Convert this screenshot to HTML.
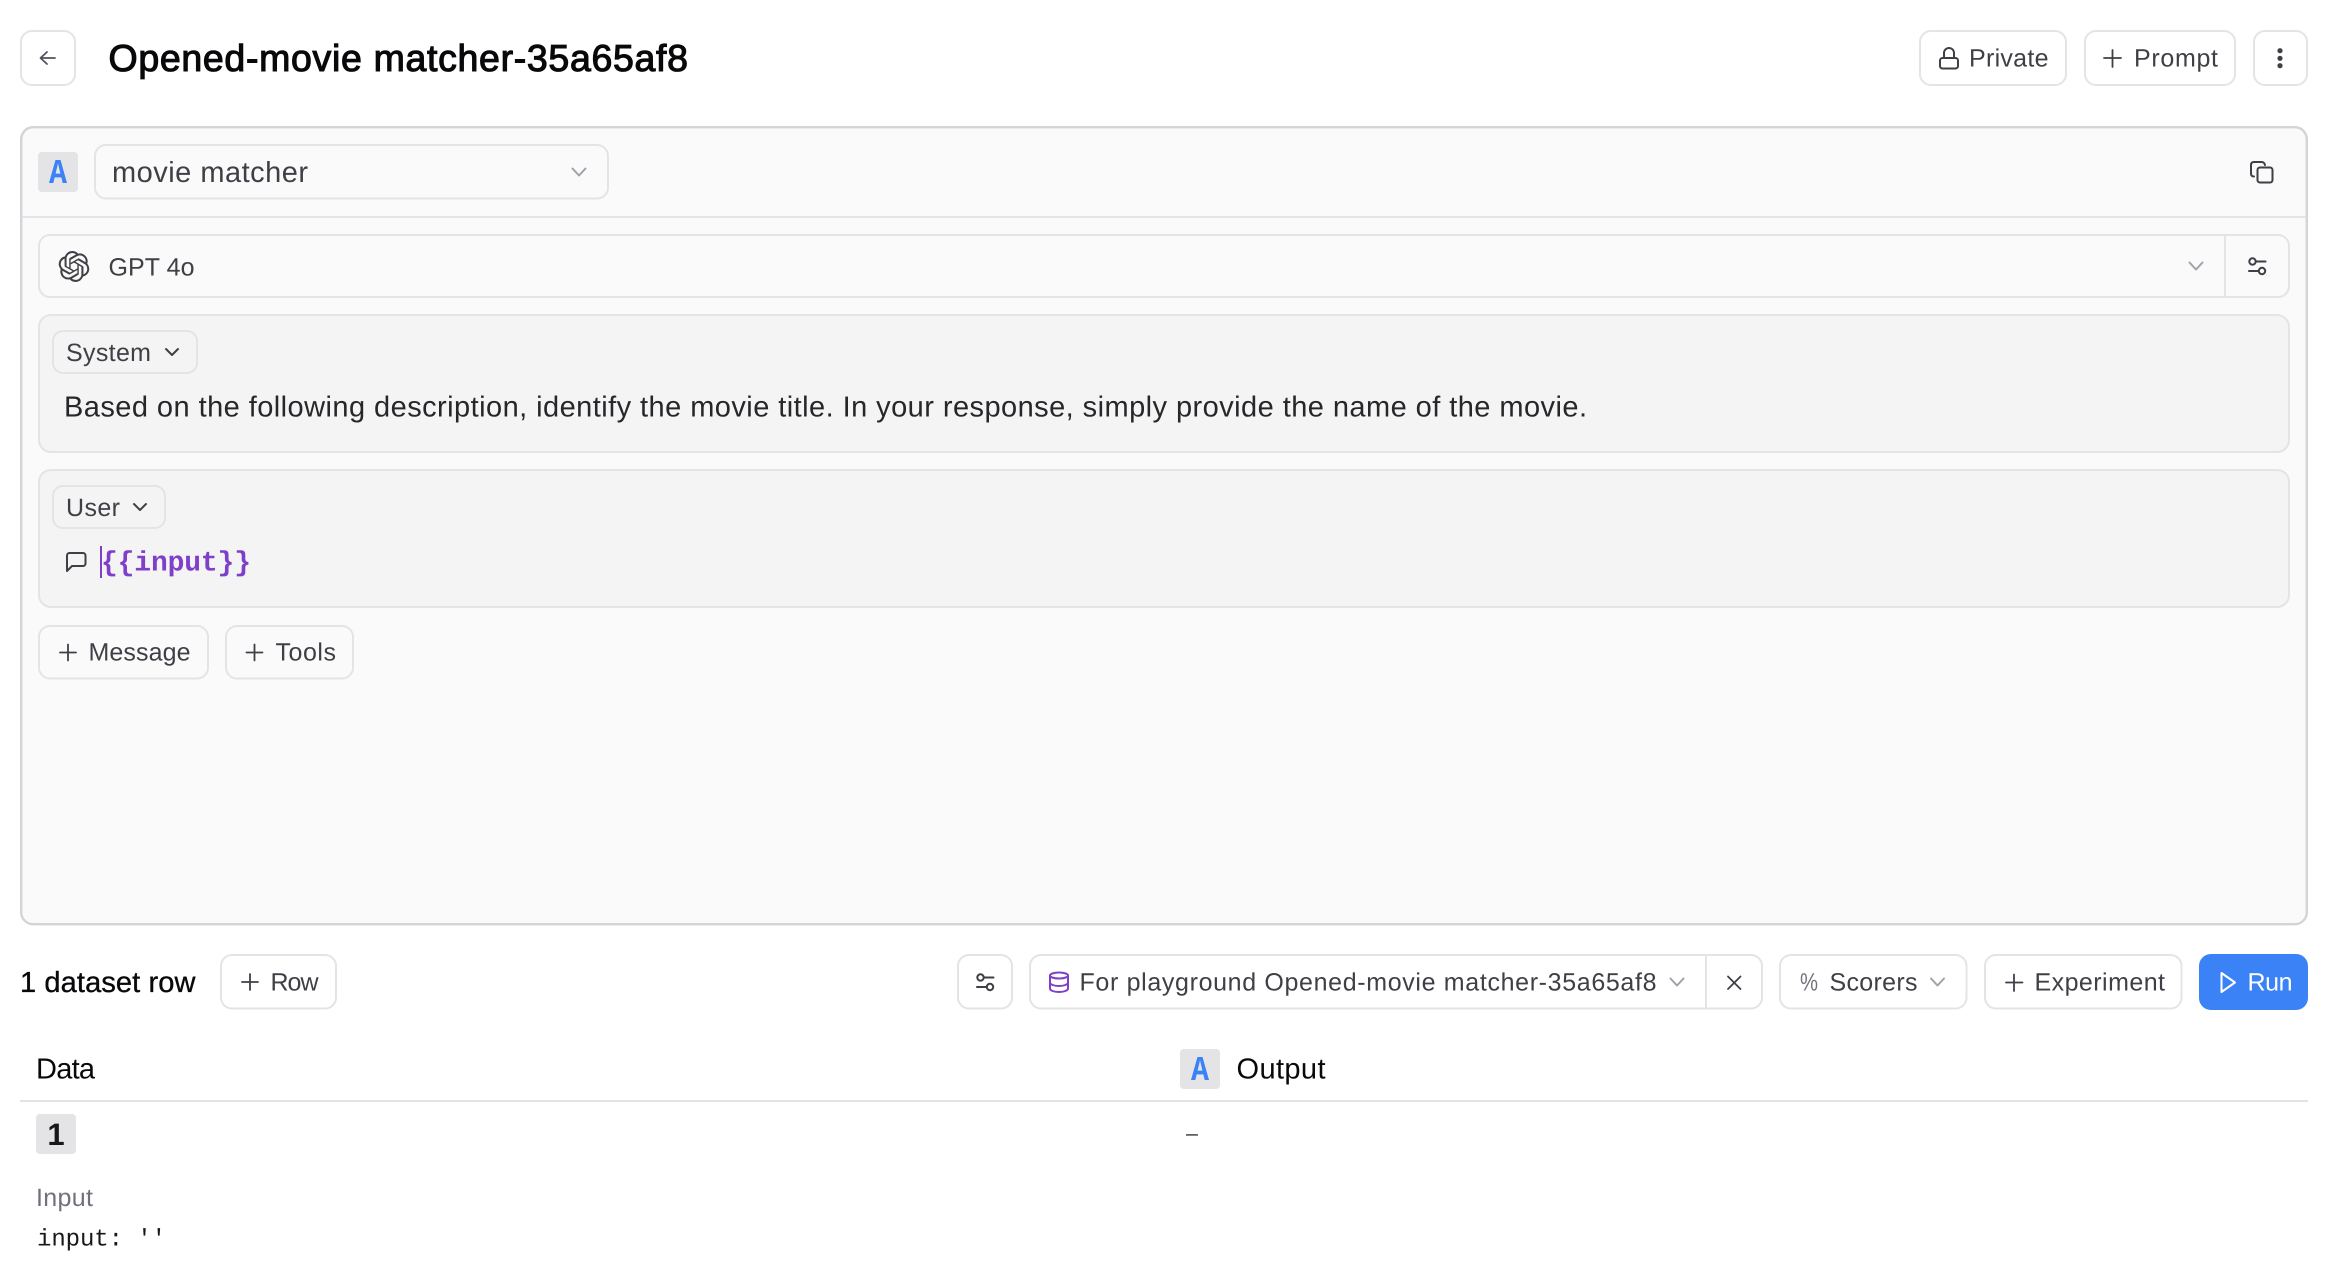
<!DOCTYPE html>
<html lang="en">
<head>
<meta charset="utf-8">
<title>Opened-movie matcher-35a65af8</title>
<style>
html,body{margin:0;padding:0;background:#fff;width:2326px;height:1280px;overflow:hidden}
svg{display:block}
text{font-family:"Liberation Sans",sans-serif;white-space:pre;text-rendering:geometricPrecision}
.mono{font-family:"Liberation Mono",monospace}
.btn{font-size:25px;fill:#3f3f46}
.box{fill:#fff;stroke:#e4e4e7;stroke-width:2}
.boxp{fill:#fafafa;stroke:#e4e4e7;stroke-width:2}
.ic{fill:none;stroke:#3f3f46;stroke-width:2;stroke-linecap:round;stroke-linejoin:round}
.pl{fill:none;stroke:#3f3f46;stroke-width:1.800;stroke-linecap:round}
.chev{fill:none;stroke:#a1a1aa;stroke-width:2;stroke-linecap:round;stroke-linejoin:round}
.med{stroke:currentColor;stroke-width:.35}
</style>
</head>
<body>
<svg width="2326" height="1280" viewBox="0 0 2326 1280" xmlns="http://www.w3.org/2000/svg">
  <!-- Header -->
  <rect class="box" x="21" y="31" width="54" height="54" rx="11"/>
  <path class="ic" d="M47 52l-6.500 6 6.500 6M41 58h14" style="stroke:#52525b;stroke-width:1.800"/>
  <text x="108.500" y="71" font-size="37.500" fill="#09090b" color="#09090b" stroke="#09090b" stroke-width="1.100" textLength="579.500">Opened-movie matcher-35a65af8</text>

  <rect class="box" x="1920" y="31" width="146" height="54" rx="11"/>
  <rect class="ic" x="1940" y="58" width="18" height="10.500" rx="2.500"/>
  <path class="ic" d="M1944 58v-5a5 5 0 0 1 10 0v5"/>
  <text class="btn" x="1969" y="66.500" textLength="79.500">Private</text>

  <rect class="box" x="2085" y="31" width="150" height="54" rx="11"/>
  <path class="pl" d="M2104 58h17M2112.500 50v17"/>
  <text class="btn" x="2134" y="66.500" textLength="84">Prompt</text>

  <rect class="box" x="2254" y="31" width="53" height="54" rx="11"/>
  <circle cx="2280" cy="50.700" r="2.600" fill="#3f3f46"/>
  <circle cx="2280" cy="58.300" r="2.600" fill="#3f3f46"/>
  <circle cx="2280" cy="65.700" r="2.600" fill="#3f3f46"/>

  <!-- Prompt panel -->
  <rect x="21.200" y="127.200" width="2285.600" height="797" rx="12" fill="#fafafa" stroke="#d4d4d8" stroke-width="2.400"/>
  <rect x="22" y="216" width="2284" height="2" fill="#e4e4e7"/>

  <rect x="38" y="152" width="40" height="40" rx="4" fill="#e4e4e7"/>
  <text class="mono" x="58" y="183" font-size="35" font-weight="700" fill="#3b82f6" text-anchor="middle" textLength="18" lengthAdjust="spacingAndGlyphs">A</text>

  <rect class="boxp" x="95" y="145" width="513" height="53.500" rx="11"/>
  <text x="112" y="182" font-size="29" fill="#3f3f46" textLength="196">movie matcher</text>
  <path class="chev" d="M572.500 168.500l6.500 7 6.500-7"/>

  <rect class="ic" x="2257.500" y="167.500" width="15" height="15" rx="2.500"/>
  <path class="ic" d="M2254 176.500c-2 0-3-1-3-3v-8.500c0-2 1-3 3-3h7.500c2 0 3 1 3.500 3"/>

  <!-- Model row -->
  <rect class="boxp" x="39" y="235" width="2250" height="62" rx="11"/>
  <rect x="2224" y="235" width="2" height="62" fill="#e4e4e7"/>
  <g transform="translate(58.500,251) scale(1.290)">
    <path fill="#3f3f46" d="M22.2819 9.8211a5.9847 5.9847 0 0 0-.5157-4.9108 6.0462 6.0462 0 0 0-6.5098-2.9A6.0651 6.0651 0 0 0 4.9807 4.1818a5.9847 5.9847 0 0 0-3.9977 2.9 6.0462 6.0462 0 0 0 .7427 7.0966 5.98 5.98 0 0 0 .511 4.9107 6.051 6.051 0 0 0 6.5146 2.9001A5.9847 5.9847 0 0 0 13.2599 24a6.0557 6.0557 0 0 0 5.7718-4.2058 5.9894 5.9894 0 0 0 3.9977-2.9001 6.0557 6.0557 0 0 0-.7475-7.0729zm-9.022 12.6081a4.4755 4.4755 0 0 1-2.8764-1.0408l.1419-.0804 4.7783-2.7582a.7948.7948 0 0 0 .3927-.6813v-6.7369l2.02 1.1686a.071.071 0 0 1 .038.052v5.5826a4.504 4.504 0 0 1-4.4945 4.4944zm-9.6607-4.1254a4.4708 4.4708 0 0 1-.5346-3.0137l.142.0852 4.783 2.7582a.7712.7712 0 0 0 .7806 0l5.8428-3.3685v2.3324a.0804.0804 0 0 1-.0332.0615L9.74 19.9502a4.4992 4.4992 0 0 1-6.1408-1.6464zM2.3408 7.8956a4.485 4.485 0 0 1 2.3655-1.9728V11.6a.7664.7664 0 0 0 .3879.6765l5.8144 3.3543-2.0201 1.1685a.0757.0757 0 0 1-.071 0l-4.8303-2.7865A4.504 4.504 0 0 1 2.3408 7.872zm16.5963 3.8558L13.1038 8.364 15.1192 7.2a.0757.0757 0 0 1 .071 0l4.8303 2.7913a4.4944 4.4944 0 0 1-.6765 8.1042v-5.6772a.79.79 0 0 0-.407-.667zm2.0107-3.0231l-.142-.0852-4.7735-2.7818a.7759.7759 0 0 0-.7854 0L9.409 9.2297V6.8974a.0662.0662 0 0 1 .0284-.0615l4.8303-2.7866a4.4992 4.4992 0 0 1 6.6802 4.66zM8.3065 12.863l-2.02-1.1638a.0804.0804 0 0 1-.038-.0567V6.0742a4.4992 4.4992 0 0 1 7.3757-3.4537l-.142.0805L8.704 5.459a.7948.7948 0 0 0-.3927.6813zm1.0976-2.3654l2.602-1.4998 2.6069 1.4998v2.9994l-2.5974 1.4997-2.6067-1.4997Z"/>
  </g>
  <text class="btn" x="108.500" y="275.500" textLength="86">GPT 4o</text>
  <path class="chev" d="M2189.500 262.500l6.500 7 6.500-7"/>
  <g id="sl">
    <circle class="ic" cx="2252.500" cy="261.500" r="3.200"/>
    <path class="ic" d="M2256 261.500h9.500"/>
    <circle class="ic" cx="2262" cy="271" r="3.200"/>
    <path class="ic" d="M2249 271h9.500"/>
  </g>

  <!-- System message -->
  <rect x="39" y="315" width="2250" height="137" rx="12" fill="#f4f4f5" stroke="#e4e4e7" stroke-width="2"/>
  <rect x="53" y="331" width="144" height="42" rx="10" fill="#f4f4f5" stroke="#e4e4e7" stroke-width="2"/>
  <text class="btn" x="66" y="361" textLength="85">System</text>
  <path class="ic" d="M166 349l6 6 6-6"/>
  <text x="64" y="416.500" font-size="29" fill="#27272a" textLength="1523">Based on the following description, identify the movie title. In your response, simply provide the name of the movie.</text>

  <!-- User message -->
  <rect x="39" y="470" width="2250" height="137" rx="12" fill="#f4f4f5" stroke="#e4e4e7" stroke-width="2"/>
  <rect x="53" y="486" width="112" height="42" rx="10" fill="#f4f4f5" stroke="#e4e4e7" stroke-width="2"/>
  <text class="btn" x="66" y="516" textLength="54">User</text>
  <path class="ic" d="M134 504l6 6 6-6"/>
  <path class="ic" d="M67 571V555.500a2.500 2.500 0 0 1 2.500-2.500H83a2.500 2.500 0 0 1 2.500 2.500v8a2.500 2.500 0 0 1-2.500 2.500H72Z"/>
  <rect x="100" y="546" width="2" height="32" fill="#7e3fc9"/>
  <text class="mono" x="101" y="570.500" font-size="28" font-weight="700" fill="#7e3fc9" textLength="150">{{input}}</text>

  <!-- Add buttons -->
  <rect class="boxp" x="39" y="626" width="169" height="52.500" rx="11"/>
  <path class="pl" d="M60 652.500h16M68 644.500v16"/>
  <text class="btn" x="88.500" y="660.500" textLength="102">Message</text>
  <rect class="boxp" x="226" y="626" width="127" height="52.500" rx="11"/>
  <path class="pl" d="M246.500 652.500h16M254.500 644.500v16"/>
  <text class="btn" x="275.500" y="660.500" textLength="60.500">Tools</text>

  <!-- Toolbar -->
  <text class="med" x="20" y="992" font-size="29" fill="#09090b" color="#09090b" textLength="175.500">1 dataset row</text>
  <rect class="box" x="221" y="955" width="115" height="53.500" rx="11"/>
  <path class="pl" d="M242 982h16M250 974v16"/>
  <text class="btn" x="270.500" y="990.500" textLength="48">Row</text>

  <rect class="box" x="958" y="955" width="54" height="53.500" rx="11"/>
  <use href="#sl" transform="translate(-1272,716)"/>

  <rect class="box" x="1030" y="955" width="732" height="53.500" rx="11"/>
  <rect x="1705" y="955" width="2" height="53.500" fill="#e4e4e7"/>
  <g fill="none" stroke="#7e3fc9" stroke-width="2" stroke-linecap="round" stroke-linejoin="round">
    <ellipse cx="1059" cy="975.500" rx="9" ry="3"/>
    <path d="M1050 975.500v13c0 2 4 3.500 9 3.500s9-1.500 9-3.500v-13"/>
    <path d="M1050 982.500c0 2 4 3.500 9 3.500s9-1.500 9-3.500"/>
  </g>
  <text class="btn" x="1079.500" y="990.500" textLength="577">For playground Opened-movie matcher-35a65af8</text>
  <path class="chev" d="M1670.500 978.500l6.500 7 6.500-7"/>
  <path class="ic" d="M1728 976.500l12.500 12.500M1740.500 976.500l-12.500 12.500" style="stroke-width:1.800"/>

  <rect class="box" x="1780" y="955" width="186.500" height="53.500" rx="11"/>
  <text x="1800" y="990.500" font-size="25" fill="#71717a" textLength="18" lengthAdjust="spacingAndGlyphs">%</text>
  <text class="btn" x="1829.500" y="990.500" textLength="88">Scorers</text>
  <path class="chev" d="M1931 978.500l6.500 7 6.500-7"/>

  <rect class="box" x="1985" y="955" width="196.500" height="53.500" rx="11"/>
  <path class="pl" d="M2006 982.500h16.500M2014 974.500v16.500"/>
  <text class="btn" x="2034.500" y="990.500" textLength="130.500">Experiment</text>

  <rect x="2199" y="954" width="109" height="56" rx="12" fill="#3b82f6"/>
  <path fill="none" stroke="#fff" stroke-width="2" stroke-linejoin="round" d="M2221.500 973L2235 982.500 2221.500 992Z"/>
  <text x="2247.500" y="990.500" font-size="25" fill="#fff" textLength="45">Run</text>

  <!-- Table -->
  <text x="36" y="1078.500" font-size="29" fill="#09090b" textLength="59">Data</text>
  <rect x="1180" y="1049" width="40" height="40" rx="4" fill="#e4e4e7"/>
  <text class="mono" x="1200" y="1080" font-size="35" font-weight="700" fill="#3b82f6" text-anchor="middle" textLength="18" lengthAdjust="spacingAndGlyphs">A</text>
  <text x="1236.500" y="1078.500" font-size="29" fill="#09090b" textLength="89">Output</text>
  <rect x="20" y="1100" width="2288" height="2" fill="#e4e4e7"/>
  <rect x="36" y="1114" width="40" height="40" rx="4" fill="#e4e4e7"/>
  <text x="56" y="1145" font-size="31" font-weight="700" fill="#18181b" text-anchor="middle">1</text>
  <text x="1186" y="1141" font-size="24" fill="#52525b" textLength="12" lengthAdjust="spacingAndGlyphs">–</text>
  <text x="36" y="1206" font-size="25" fill="#71717a" textLength="57">Input</text>
  <text class="mono" x="37" y="1245.500" font-size="24" fill="#18181b" textLength="129">input: ''</text>
</svg>
</body>
</html>
